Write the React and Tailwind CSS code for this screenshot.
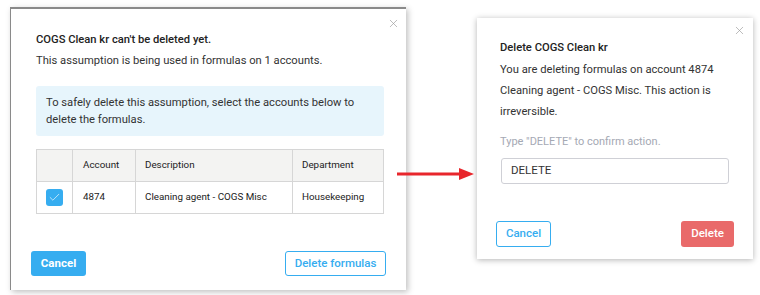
import { X, Check } from "lucide-react";

const font = { fontFamily: "Roboto, 'Liberation Sans', sans-serif" };

const App = () => {
    return (
        <div className="w-[760px] h-[295px] bg-white relative overflow-hidden text-[#222]" style={font}>
            <div className="flex items-start">
                {/* left dialog */}
                <div className="ml-[10px] mt-[7px] w-[396px] h-[283px] bg-white border-t-2 border-l border-[#8a8a8a] shadow-[2px_2px_6px_rgba(0,0,0,0.25)] relative flex flex-col px-[25px]">
                    <X size={13} strokeWidth={1.2} className="absolute right-[6px] top-[8px] text-[#999]" />
                    <p className="mt-[23px] text-[11.2px] font-medium leading-[16px]">COGS Clean kr can't be deleted yet.</p>
                    <p className="mt-[5px] text-[11.2px] leading-[16px] text-[#333]">This assumption is being used in formulas on 1 accounts.</p>
                    <div className="mt-[17px] w-[348px] bg-[#e7f5fc] rounded-[3px] px-[10px] py-[8px] text-[11.2px] leading-[17px] text-[#333] whitespace-nowrap">
                        To safely delete this assumption, select the accounts below to
                        <br />
                        delete the formulas.
                    </div>
                    <table className="mt-[13px] w-[348px] border-collapse text-[9.8px] text-[#222]">
                        <thead>
                            <tr className="bg-[#f3f3f2] h-[32px]">
                                <th className="border border-[#d6d6d6] w-[36px]"></th>
                                <th className="border border-[#d6d6d6] w-[63px] text-left font-normal pl-[10px]">Account</th>
                                <th className="border border-[#d6d6d6] w-[157px] text-left font-normal pl-[9px]">Description</th>
                                <th className="border border-[#d6d6d6] text-left font-normal pl-[9px]">Department</th>
                            </tr>
                        </thead>
                        <tbody>
                            <tr className="h-[32px]">
                                <td className="border border-[#d6d6d6] pl-[9px]">
                                    <div className="w-[17px] h-[17px] rounded-[3px] bg-[#36adf0] flex items-center justify-center">
                                        <Check size={13} strokeWidth={1.2} className="text-white" />
                                    </div>
                                </td>
                                <td className="border border-[#d6d6d6] pl-[10px]">4874</td>
                                <td className="border border-[#d6d6d6] pl-[9px]">Cleaning agent - COGS Misc</td>
                                <td className="border border-[#d6d6d6] pl-[9px]">Housekeeping</td>
                            </tr>
                        </tbody>
                    </table>
                    <div className="mt-auto mb-[14px] -mx-[5px] flex justify-between">
                        <button className="h-[25px] w-[55px] rounded-[3px] bg-[#36adf0] text-white text-[11.5px] font-bold">Cancel</button>
                        <button className="h-[25px] w-[101px] rounded-[3px] border border-[#36adf0] text-[#36adf0] text-[11.5px] font-medium">Delete formulas</button>
                    </div>
                </div>

                {/* arrow */}
                <div className="w-[71px] mt-[167px] relative z-10">
                    <svg width="80" height="14" viewBox="0 0 80 14" className="-ml-[10px]">
                        <line x1="1" y1="7" x2="64" y2="7" stroke="#e8262c" strokeWidth="3" />
                        <polygon points="63,1 78,7 63,13" fill="#e8262c" />
                    </svg>
                </div>

                {/* right dialog */}
                <div className="mt-[18px] w-[276px] h-[241px] bg-white shadow-[0_1px_6px_rgba(0,0,0,0.3)] relative flex flex-col pl-[23px] pr-[16px]">
                    <X size={13} strokeWidth={1.2} className="absolute right-[7px] top-[6px] text-[#999]" />
                    <p className="mt-[22px] text-[11.2px] font-medium leading-[16px]">Delete COGS Clean kr</p>
                    <p className="mt-[3px] text-[11.2px] leading-[21px] text-[#333] whitespace-nowrap">
                        You are deleting formulas on account 4874
                        <br />
                        Cleaning agent - COGS Misc. This action is
                        <br />
                        irreversible.
                    </p>
                    <p className="mt-[12px] text-[11px] leading-[16px] text-[#a5a9b4]">Type "DELETE" to confirm action.</p>
                    <div className="mt-[8px] ml-[1px] w-[228px] h-[26px] border border-[#cfd0d6] rounded-[3px] flex items-center pl-[9px] text-[11.5px] text-[#333]">DELETE</div>
                    <div className="mt-auto mb-[12px] -ml-[4px] w-[238px] flex justify-between">
                        <button className="h-[26px] w-[55px] rounded-[3px] border border-[#36adf0] text-[#36adf0] text-[11.5px] font-medium">Cancel</button>
                        <button className="h-[26px] w-[53px] rounded-[3px] bg-[#e96a6a] text-white text-[11.5px] font-medium">Delete</button>
                    </div>
                </div>
            </div>
        </div>
    );
};

export default App;
